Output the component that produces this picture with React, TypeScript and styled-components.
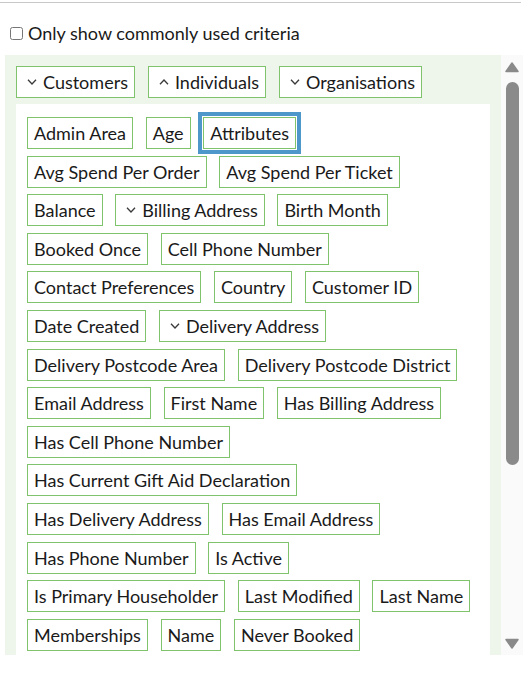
import React, { FC } from 'react'
import styled, { createGlobalStyle } from 'styled-components'

type Criterion = {
  label: string
  expandable?: boolean
  focused?: boolean
}

const groups = [
  { label: 'Customers', open: false },
  { label: 'Individuals', open: true },
  { label: 'Organisations', open: false },
]

const criteria: Criterion[] = [
  { label: 'Admin Area' },
  { label: 'Age' },
  { label: 'Attributes', focused: true },
  { label: 'Avg Spend Per Order' },
  { label: 'Avg Spend Per Ticket' },
  { label: 'Balance' },
  { label: 'Billing Address', expandable: true },
  { label: 'Birth Month' },
  { label: 'Booked Once' },
  { label: 'Cell Phone Number' },
  { label: 'Contact Preferences' },
  { label: 'Country' },
  { label: 'Customer ID' },
  { label: 'Date Created' },
  { label: 'Delivery Address', expandable: true },
  { label: 'Delivery Postcode Area' },
  { label: 'Delivery Postcode District' },
  { label: 'Email Address' },
  { label: 'First Name' },
  { label: 'Has Billing Address' },
  { label: 'Has Cell Phone Number' },
  { label: 'Has Current Gift Aid Declaration' },
  { label: 'Has Delivery Address' },
  { label: 'Has Email Address' },
  { label: 'Has Phone Number' },
  { label: 'Is Active' },
  { label: 'Is Primary Householder' },
  { label: 'Last Modified' },
  { label: 'Last Name' },
  { label: 'Memberships' },
  { label: 'Name' },
  { label: 'Never Booked' },
]

const GlobalStyle = createGlobalStyle`
  body {
    margin: 0;
    background: #fff;
    color: #1a1a1a;
    font-family: Lato, 'Noto Sans', sans-serif;
  }
`

const Page = styled.div`
  width: 526px;
  height: 673px;
  overflow: hidden;
`

const Divider = styled.div`
  margin-top: 2px;
  width: 521px;
  height: 1px;
  background: #c9c9c9;
`

const FilterRow = styled.label`
  display: flex;
  align-items: center;
  gap: 5px;
  height: 24px;
  margin-top: 18px;
  padding-left: 10px;
  font-size: 18px;
`

const Checkbox = styled.input`
  margin: 0;
  width: 13px;
  height: 13px;
`

const Panel = styled.div`
  display: flex;
  width: 518px;
  height: 600px;
  margin: 10px 0 0 5px;
`

const PanelBody = styled.div`
  flex: 1;
  display: flex;
  flex-direction: column;
  padding: 11px 11px 0;
  background: #eef6eb;
  overflow: hidden;
`

const GroupRow = styled.div`
  display: flex;
  gap: 13px;
`

const Chip = styled.button<{ $focused?: boolean }>`
  display: inline-flex;
  align-items: center;
  height: 32px;
  padding: 0 6px;
  border: 1px solid #7fc46d;
  background: #fff;
  color: #1a1a1a;
  font: inherit;
  font-size: 18px;
  white-space: nowrap;
  cursor: pointer;
  outline: ${(p) => (p.$focused ? '4px solid #4d97cb' : 'none')};
  outline-offset: 1px;
`

const TagArea = styled.div`
  flex: 1;
  display: flex;
  flex-wrap: wrap;
  align-content: flex-start;
  column-gap: 12.7px;
  row-gap: 6.6px;
  margin-top: 6px;
  padding: 13px 11px 0;
  background: #fff;
`

const ChevronIcon = styled.svg`
  flex: none;
  margin: 0 6px 0 4px;
`

const ScrollTrack = styled.div`
  width: 22px;
  display: flex;
  flex-direction: column;
  align-items: center;
  padding: 7px 0 6px;
  box-sizing: border-box;
  background: #fafafa;
`

const Thumb = styled.div`
  width: 13px;
  height: 383px;
  margin: 9px 0 auto;
  border-radius: 7px;
  background: #8a8a8a;
`

const Chevron: FC<{ up?: boolean }> = ({ up }) => (
  <ChevronIcon width="10" height="6" viewBox="0 0 10 6">
    <polyline
      points={up ? '1,5.2 5,1 9,5.2' : '1,0.8 5,5 9,0.8'}
      fill="none"
      stroke="#3a3a3a"
      strokeWidth="1.3"
    />
  </ChevronIcon>
)

const Arrow: FC<{ down?: boolean }> = ({ down }) => (
  <svg width="14" height="11" viewBox="0 0 14 11">
    <path
      d={down ? 'M1 1.5 H13 L7 10 Z' : 'M1 9.5 H13 L7 1 Z'}
      fill="#8a8a8a"
      stroke="#8a8a8a"
      strokeWidth="1.5"
      strokeLinejoin="round"
    />
  </svg>
)

const App: FC = () => (
  <Page>
    <GlobalStyle />
    <Divider />
    <FilterRow>
      <Checkbox type="checkbox" />
      Only show commonly used criteria
    </FilterRow>
    <Panel>
      <PanelBody>
        <GroupRow>
          {groups.map((g) => (
            <Chip key={g.label}>
              <Chevron up={g.open} />
              {g.label}
            </Chip>
          ))}
        </GroupRow>
        <TagArea>
          {criteria.map((c) => (
            <Chip key={c.label} $focused={c.focused}>
              {c.expandable && <Chevron />}
              {c.label}
            </Chip>
          ))}
        </TagArea>
      </PanelBody>
      <ScrollTrack>
        <Arrow />
        <Thumb />
        <Arrow down />
      </ScrollTrack>
    </Panel>
  </Page>
)

export default App
